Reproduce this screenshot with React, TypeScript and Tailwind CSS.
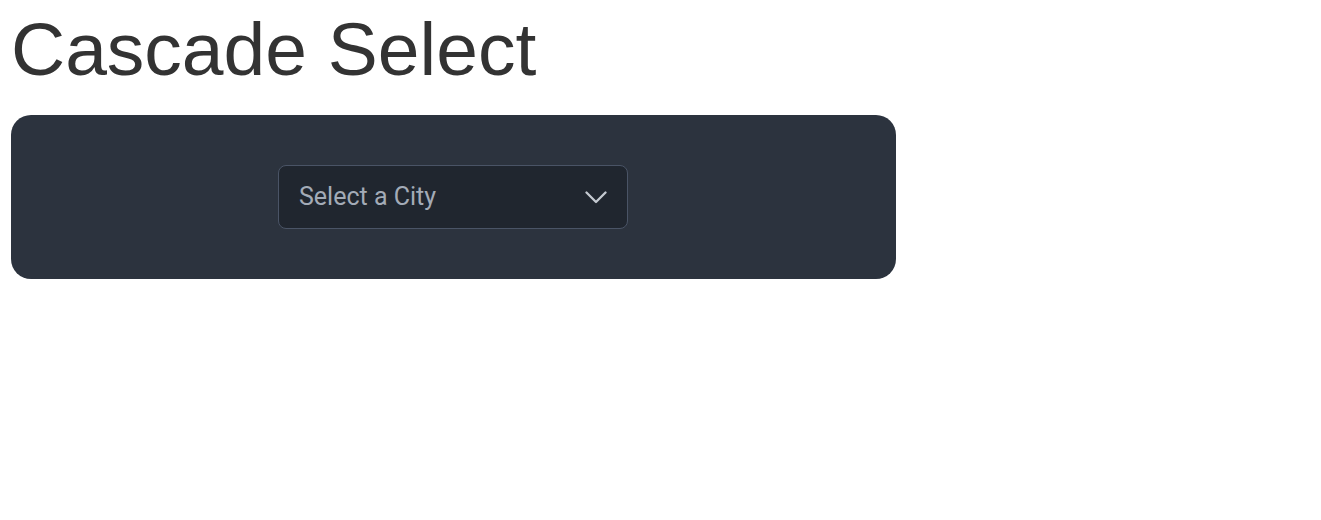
import React from "react";

export default function App() {
  return (
    <div className="min-h-[520px] bg-white px-[11px]">
      <h1
        className="mt-[6px] text-[75px] leading-[86px] font-normal text-[#333333]"
        style={{ fontFamily: '"Liberation Sans", Arial, sans-serif' }}
      >
        Cascade Select
      </h1>
      <div className="mt-[23px] flex h-[164px] w-[885px] items-center justify-center rounded-[20px] bg-[#2c333e] pr-[1px]">
        <div
          className="flex h-[64px] w-[350px] items-center justify-between rounded-[8px] border border-[#4a5466] bg-[#20262f] pl-[20px] pr-[20px]"
          style={{ fontFamily: 'Roboto, "Noto Sans", sans-serif' }}
        >
          <span className="text-[25px] text-[#a3abb7]">Select a City</span>
          <svg width="22" height="13" viewBox="0 0 22 13" fill="none">
            <polyline
              points="1.5,1.5 11,11 20.5,1.5"
              stroke="#c4c9d1"
              strokeWidth="2.3"
              strokeLinecap="round"
              strokeLinejoin="round"
            />
          </svg>
        </div>
      </div>
    </div>
  );
}
